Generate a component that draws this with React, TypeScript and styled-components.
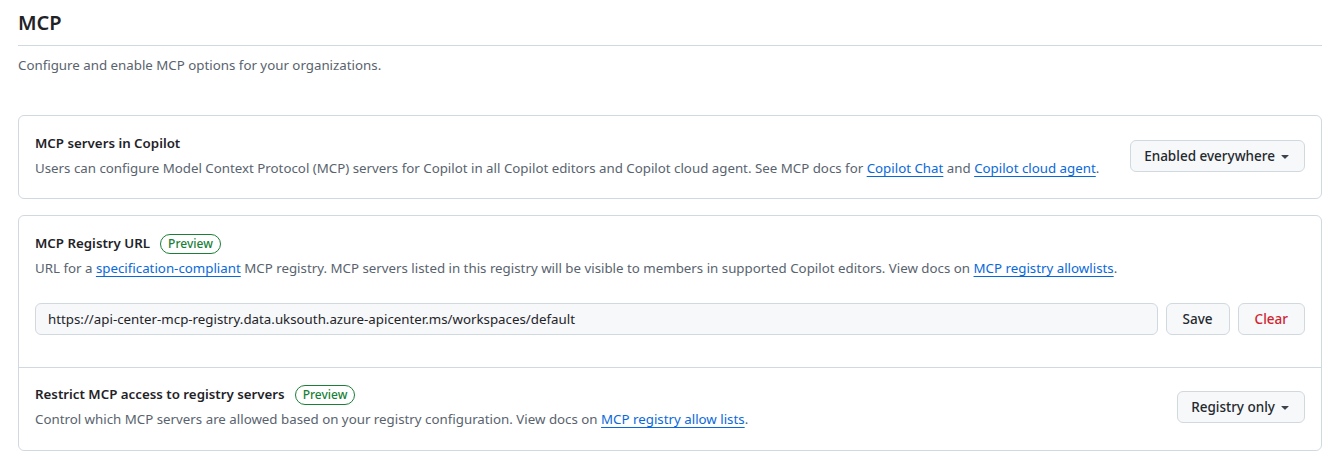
import React from 'react'
import styled, { createGlobalStyle } from 'styled-components'

const GlobalStyle = createGlobalStyle`
  html, body {
    margin: 0;
    padding: 0;
    background: #ffffff;
  }
  body {
    font-family: "Noto Sans", "Liberation Sans", sans-serif;
    font-size: 13.3px;
    color: #1f2328;
  }
`

const Page = styled.div`
  padding: 0 16px 0 18px;
  width: 1304px;
`

const Subhead = styled.div`
  display: flex;
  align-items: center;
  height: 45px;
  border-bottom: 1px solid #d1d9e0;
`

const SubheadTitle = styled.h2`
  margin: 0;
  font-size: 20px;
  font-weight: 600;
  line-height: 30px;
`

const Intro = styled.p`
  margin: 9px 0 0;
  color: #59636e;
  line-height: 21px;
`

const Card = styled.div<{ $top: number }>`
  margin-top: ${p => p.$top}px;
  border: 1px solid #d1d9e0;
  border-radius: 6px;
`

const Section = styled.div<{ $divided?: boolean }>`
  padding: ${p => (p.$divided ? '16px 16px 20px' : '17px 16px 19px')};
  border-top: ${p => (p.$divided ? '1px solid #d1d9e0' : 'none')};
`

const Row = styled.div`
  display: flex;
  align-items: center;
  justify-content: space-between;
  gap: 24px;
`

const TextCol = styled.div`
  display: flex;
  flex-direction: column;
  gap: 4px;
`

const Title = styled.div`
  display: flex;
  align-items: center;
  gap: 10px;
  font-weight: 600;
  line-height: 21px;
`

const Desc = styled.div`
  color: #59636e;
  line-height: 21px;
`

const DocLink = styled.a`
  color: #0969da;
  text-decoration: underline;
  text-underline-offset: 3px;
`

const Badge = styled.span`
  display: inline-flex;
  align-items: center;
  height: 18px;
  padding: 0 7px;
  border: 1px solid #1a7f37;
  border-radius: 999px;
  color: #1a7f37;
  font-size: 12px;
  font-weight: 500;
`

const Button = styled.button<{ $danger?: boolean; $menu?: boolean }>`
  display: inline-flex;
  align-items: center;
  gap: 2px;
  height: 32px;
  padding: ${p => (p.$menu ? '0 11px 0 13px' : '0 16px')};
  border: 1px solid #d1d9e0;
  border-radius: 6px;
  background: #f6f8fa;
  color: ${p => (p.$danger ? '#d1242f' : '#25292e')};
  font-family: inherit;
  font-size: 13.5px;
  font-weight: 500;
  white-space: nowrap;
  flex-shrink: 0;
  cursor: pointer;
`

const FormRow = styled.div`
  display: flex;
  align-items: center;
  gap: 8px;
  margin: 24px 0 13px;
`

const UrlInput = styled.input`
  flex: 1;
  height: 32px;
  box-sizing: border-box;
  padding: 0 12px;
  border: 1px solid #d1d9e0;
  border-radius: 6px;
  background: #f6f8fa;
  color: #1f2328;
  font-family: inherit;
  font-size: 13.3px;
`

const Caret = () => (
  <svg width="16" height="16" viewBox="0 0 16 16" fill="#3d444d">
    <path d="m4.427 7.427 3.396 3.396a.25.25 0 0 0 .354 0l3.396-3.396A.25.25 0 0 0 11.396 7H4.604a.25.25 0 0 0-.177.427Z" />
  </svg>
)

export default function App() {
  return (
    <>
      <GlobalStyle />
      <Page>
        <Subhead>
          <SubheadTitle>MCP</SubheadTitle>
        </Subhead>
        <Intro>Configure and enable MCP options for your organizations.</Intro>

        <Card $top={39}>
          <Section>
            <Row>
              <TextCol>
                <Title>MCP servers in Copilot</Title>
                <Desc>
                  Users can configure Model Context Protocol (MCP) servers for Copilot in all Copilot editors and
                  Copilot cloud agent. See MCP docs for <DocLink href="#">Copilot Chat</DocLink> and{' '}
                  <DocLink href="#">Copilot cloud agent</DocLink>.
                </Desc>
              </TextCol>
              <Button $menu>
                Enabled everywhere <Caret />
              </Button>
            </Row>
          </Section>
        </Card>

        <Card $top={16}>
          <Section>
            <TextCol>
              <Title>
                MCP Registry URL <Badge>Preview</Badge>
              </Title>
              <Desc>
                URL for a <DocLink href="#">specification-compliant</DocLink> MCP registry. MCP servers listed in this
                registry will be visible to members in supported Copilot editors. View docs on{' '}
                <DocLink href="#">MCP registry allowlists</DocLink>.
              </Desc>
            </TextCol>
            <FormRow>
              <UrlInput
                defaultValue="https://api-center-mcp-registry.data.uksouth.azure-apicenter.ms/workspaces/default"
              />
              <Button>Save</Button>
              <Button $danger>Clear</Button>
            </FormRow>
          </Section>
          <Section $divided>
            <Row>
              <TextCol>
                <Title>
                  Restrict MCP access to registry servers <Badge>Preview</Badge>
                </Title>
                <Desc>
                  Control which MCP servers are allowed based on your registry configuration. View docs on{' '}
                  <DocLink href="#">MCP registry allow lists</DocLink>.
                </Desc>
              </TextCol>
              <Button $menu>
                Registry only <Caret />
              </Button>
            </Row>
          </Section>
        </Card>
      </Page>
    </>
  )
}
